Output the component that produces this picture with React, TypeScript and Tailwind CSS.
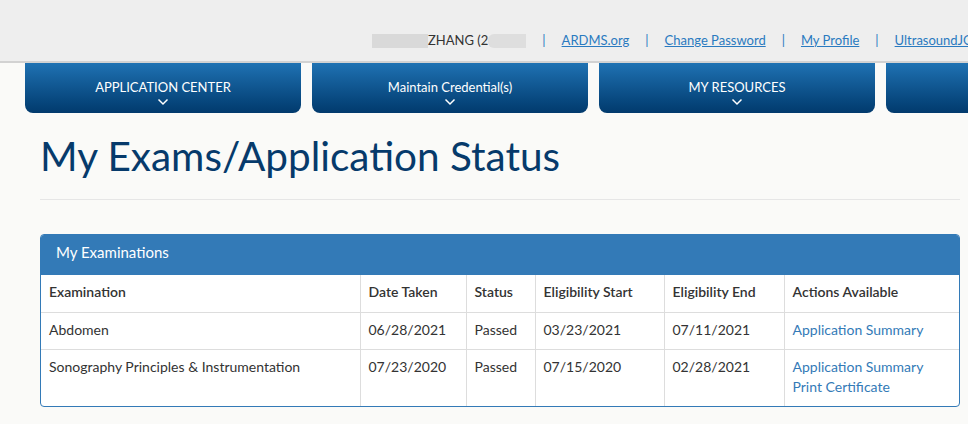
import React from "react";

type NavItem = {
  label: string;
};

const navItems: NavItem[] = [
  { label: "APPLICATION CENTER" },
  { label: "Maintain Credential(s)" },
  { label: "MY RESOURCES" },
  { label: "" },
];

type ExamRow = {
  exam: string;
  dateTaken: string;
  status: string;
  start: string;
  end: string;
  actions: string[];
};

const exams: ExamRow[] = [
  {
    exam: "Abdomen",
    dateTaken: "06/28/2021",
    status: "Passed",
    start: "03/23/2021",
    end: "07/11/2021",
    actions: ["Application Summary"],
  },
  {
    exam: "Sonography Principles & Instrumentation",
    dateTaken: "07/23/2020",
    status: "Passed",
    start: "07/15/2020",
    end: "02/28/2021",
    actions: ["Application Summary", "Print Certificate"],
  },
];

const Chevron = () => (
  <svg width="12" height="8" viewBox="0 0 12 8" fill="none" className="mx-auto mt-[2px]">
    <path d="M1.5 1.5 L6 6 L10.5 1.5" stroke="white" strokeWidth="1.5" />
  </svg>
);

const Sep = () => <span className="mx-[16px] text-[#2a7ac0]">|</span>;

const TopBar = () => (
  <div className="h-[63px] bg-[#eeeeee] border-b-2 border-[#d2d2d2] flex items-center pl-[372px] pt-[20px] text-[13px] whitespace-nowrap overflow-hidden">
    <span className="flex items-center text-[#333]">
      <span className="inline-block w-[56px] h-[14px] bg-[#d9d9d9]" />
      ZHANG (2
      <span className="inline-block w-[38px] h-[14px] bg-[#dedede] rounded-l-md" />
    </span>
    <Sep />
    <a className="text-[#2a7ac0] underline">ARDMS.org</a>
    <Sep />
    <a className="text-[#2a7ac0] underline">Change Password</a>
    <Sep />
    <a className="text-[#2a7ac0] underline">My Profile</a>
    <Sep />
    <a className="text-[#2a7ac0] underline">UltrasoundJO</a>
  </div>
);

const Nav = () => (
  <div className="flex gap-[11px] pl-[25px] whitespace-nowrap">
    {navItems.map((item, i) => (
      <div
        key={i}
        className="w-[276px] h-[50px] shrink-0 rounded-b-[8px] bg-gradient-to-b from-[#1f72b3] to-[#023a6d] text-white text-[13px] flex flex-col items-center justify-center pt-[7px]"
      >
        {item.label && <span className="leading-[18px]">{item.label}</span>}
        {item.label && <Chevron />}
      </div>
    ))}
  </div>
);

const headers = [
  { label: "Examination", w: "w-[319px]" },
  { label: "Date Taken", w: "w-[106px]" },
  { label: "Status", w: "w-[69px]" },
  { label: "Eligibility Start", w: "w-[129px]" },
  { label: "Eligibility End", w: "w-[120px]" },
  { label: "Actions Available", w: "" },
];

const cell =
  "border-l border-t border-[#dddddd] px-[8px] py-[7px] leading-[20px] align-top first:border-l-0";

const ExamsPanel = () => (
  <div className="ml-[40px] mt-[34px] w-[920px] rounded-[4px] border border-[#337ab7] bg-white overflow-hidden">
    <div className="h-[40px] bg-[#337ab7] text-white text-[15px] flex items-center px-[15px] pb-[6px]">
      My Examinations
    </div>
    <table className="w-full border-collapse text-[14px] text-[#333]">
      <thead>
        <tr className="h-[37px]">
          {headers.map((h) => (
            <th key={h.label} className={`${cell} ${h.w} text-left font-semibold border-t-0`}>
              {h.label}
            </th>
          ))}
        </tr>
      </thead>
      <tbody>
        {exams.map((row, i) => (
          <tr key={row.exam} className={i === 1 ? "h-[57px]" : "h-[37px]"}>
            <td className={cell}>{row.exam}</td>
            <td className={cell}>{row.dateTaken}</td>
            <td className={cell}>{row.status}</td>
            <td className={cell}>{row.start}</td>
            <td className={cell}>{row.end}</td>
            <td className={cell}>
              {row.actions.map((a) => (
                <div key={a} className="text-[#337ab7]">
                  {a}
                </div>
              ))}
            </td>
          </tr>
        ))}
      </tbody>
    </table>
  </div>
);

export default function App() {
  return (
    <div className="w-[968px] h-[424px] overflow-hidden bg-[#fafaf8] font-['Lato',sans-serif]">
      <TopBar />
      <Nav />
      <div className="pl-[40px] pr-[8px] pt-[18px]">
        <h1 className="text-[40.5px] leading-[50px] text-[#063a6b] font-normal">
          My Exams/Application Status
        </h1>
        <div className="mt-[18px] border-b border-[#e6e6e6]" />
      </div>
      <ExamsPanel />
    </div>
  );
}
